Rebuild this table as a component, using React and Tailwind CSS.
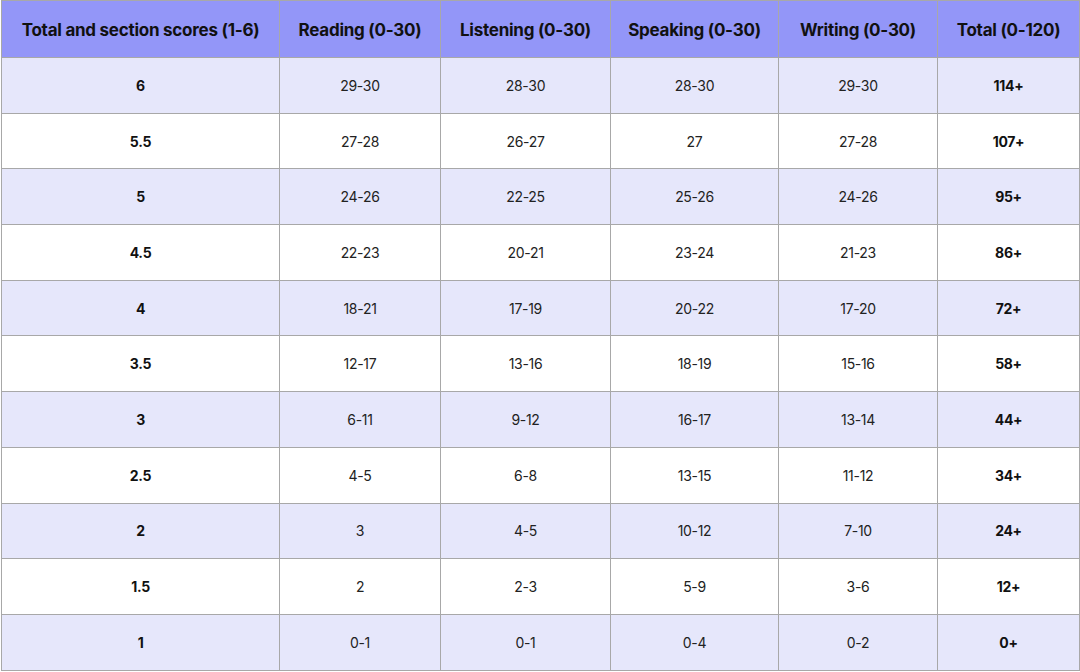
import React from "react";

const headers = [
  "Total and section scores (1-6)",
  "Reading (0-30)",
  "Listening (0-30)",
  "Speaking (0-30)",
  "Writing (0-30)",
  "Total (0-120)",
];

const rows = [
  ["6", "29-30", "28-30", "28-30", "29-30", "114+"],
  ["5.5", "27-28", "26-27", "27", "27-28", "107+"],
  ["5", "24-26", "22-25", "25-26", "24-26", "95+"],
  ["4.5", "22-23", "20-21", "23-24", "21-23", "86+"],
  ["4", "18-21", "17-19", "20-22", "17-20", "72+"],
  ["3.5", "12-17", "13-16", "18-19", "15-16", "58+"],
  ["3", "6-11", "9-12", "16-17", "13-14", "44+"],
  ["2.5", "4-5", "6-8", "13-15", "11-12", "34+"],
  ["2", "3", "4-5", "10-12", "7-10", "24+"],
  ["1.5", "2", "2-3", "5-9", "3-6", "12+"],
  ["1", "0-1", "0-1", "0-4", "0-2", "0+"],
];

const widths = ["w-[278px]", "w-[161px]", "w-[170px]", "w-[168px]", "w-[159px]", "w-[142px]"];

export default function App() {
  return (
    <div className="bg-white pl-px" style={{ fontFamily: "Inter, 'Liberation Sans', sans-serif" }}>
      <table className="border-collapse table-fixed w-[1078px] text-[#1a1a1a]">
        <colgroup>
          {widths.map((w, i) => (
            <col key={i} className={w} />
          ))}
        </colgroup>
        <thead>
          <tr className="h-[57px] bg-[#9396f8]">
            {headers.map((h, i) => (
              <th
                key={i}
                className="border border-[#a8a8a8] pt-[3px] text-center text-[17px] font-bold tracking-[-0.25px] text-[#111]"
              >
                {h}
              </th>
            ))}
          </tr>
        </thead>
        <tbody>
          {rows.map((r, ri) => (
            <tr key={ri} className={`h-[55.7px] ${ri % 2 === 0 ? "bg-[#e6e7fb]" : "bg-white"}`}>
              {r.map((c, ci) => (
                <td
                  key={ci}
                  className={`border border-[#a8a8a8] text-center text-[14px] tracking-[-0.3px] ${
                    ci === 0 || ci === 5 ? "font-bold text-[#111]" : "font-normal text-[#222]"
                  }`}
                >
                  {c}
                </td>
              ))}
            </tr>
          ))}
        </tbody>
      </table>
    </div>
  );
}
